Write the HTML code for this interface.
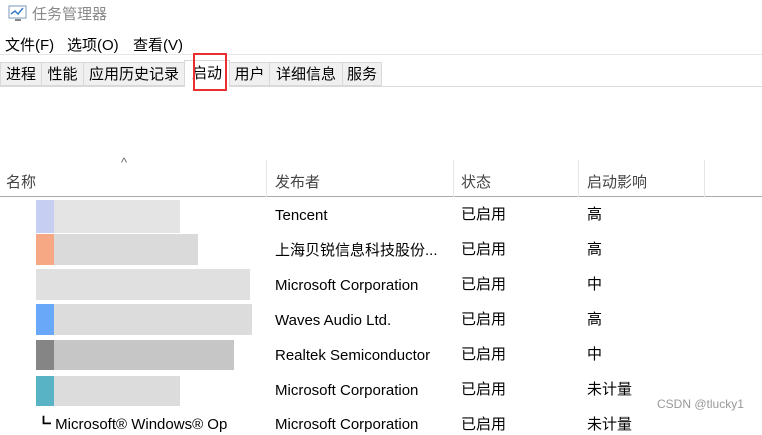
<!DOCTYPE html><html><head><meta charset="utf-8"><style>
body{margin:0;width:762px;height:422px;overflow:hidden;background:#fff;font-family:"Liberation Sans","Noto Sans CJK SC",sans-serif;color:#000;position:relative}
.a{position:absolute;white-space:nowrap}
.t{font-size:15px;line-height:20px}
.tab{position:absolute;top:62px;height:24px;border:1px solid #d9d9d9;background:#f0f0f0;font-size:15px;line-height:24px;text-align:center;box-sizing:border-box}
.vl{position:absolute;top:160px;height:37px;width:1px;background:#e5e5e5}
.blk{position:absolute;background:#dcdcdc}
</style></head><body>
<svg class="a" style="left:8px;top:4px" width="20" height="18"><rect x="1" y="2" width="17" height="12" fill="#fff" stroke="#7a99b8"/><polyline points="3,10 7,7 10,10 15,4" fill="none" stroke="#3a7bc8" stroke-width="1.5"/><rect x="7" y="15" width="6" height="2" fill="#888"/></svg>
<div class="a" style="left:32px;top:3px;font-size:15px;color:#8a8a8a">任务管理器</div>
<div class="a t" style="left:5px;top:36px">文件(F)</div>
<div class="a t" style="left:67px;top:36px">选项(O)</div>
<div class="a t" style="left:133px;top:36px">查看(V)</div>
<div class="a" style="left:0;top:54px;width:762px;height:1px;background:#e6e6e6"></div>
<div class="a" style="left:0;top:86px;width:762px;height:1px;background:#d9d9d9"></div>
<div class="tab" style="left:0;width:42px">进程</div>
<div class="tab" style="left:41px;width:43px">性能</div>
<div class="tab" style="left:83px;width:102px">应用历史记录</div>
<div class="tab" style="left:184px;top:60px;height:27px;width:46px;background:#fff;border-bottom:none;line-height:26px">启动</div>
<div class="tab" style="left:229px;width:41px">用户</div>
<div class="tab" style="left:269px;width:74px">详细信息</div>
<div class="tab" style="left:342px;width:40px">服务</div>
<div class="a" style="left:193px;top:53px;width:34px;height:38px;border:2px solid #e83030;box-sizing:border-box"></div>
<div class="a" style="left:121px;top:155px;font-size:13px;color:#666">^</div>
<div class="a" style="left:0;top:196px;width:762px;height:1px;background:#aaa"></div>
<div class="vl" style="left:266px"></div><div class="vl" style="left:453px"></div><div class="vl" style="left:578px"></div><div class="vl" style="left:704px"></div>
<div class="a t" style="left:6px;top:173px;color:#444">名称</div>
<div class="a t" style="left:275px;top:173px;color:#444">发布者</div>
<div class="a t" style="left:461px;top:173px;color:#444">状态</div>
<div class="a t" style="left:587px;top:173px;color:#444">启动影响</div>
<div class="blk" style="left:36px;top:200px;width:144px;height:33px;background:#e4e4e4"></div><div class="blk" style="left:36px;top:200px;width:18px;height:33px;background:#c6cff2"></div>
<div class="blk" style="left:36px;top:234px;width:162px;height:31px;background:#dadada"></div><div class="blk" style="left:36px;top:234px;width:18px;height:31px;background:#f5a883"></div>
<div class="blk" style="left:36px;top:269px;width:214px;height:31px;background:#e0e0e0"></div>
<div class="blk" style="left:36px;top:304px;width:216px;height:31px;background:#dcdcdc"></div><div class="blk" style="left:36px;top:304px;width:18px;height:31px;background:#69a8f8"></div>
<div class="blk" style="left:36px;top:340px;width:198px;height:30px;background:#c6c6c6"></div><div class="blk" style="left:36px;top:340px;width:18px;height:30px;background:#858585"></div>
<div class="blk" style="left:36px;top:376px;width:144px;height:30px;background:#dcdcdc"></div><div class="blk" style="left:36px;top:376px;width:18px;height:30px;background:#58b4c4"></div>
<div class="a t" style="left:275px;top:206px">Tencent</div><div class="a t" style="left:461px;top:205px">已启用</div><div class="a t" style="left:587px;top:205px">高</div>
<div class="a t" style="left:275px;top:241px">上海贝锐信息科技股份...</div><div class="a t" style="left:461px;top:240px">已启用</div><div class="a t" style="left:587px;top:240px">高</div>
<div class="a t" style="left:275px;top:276px">Microsoft Corporation</div><div class="a t" style="left:461px;top:275px">已启用</div><div class="a t" style="left:587px;top:275px">中</div>
<div class="a t" style="left:275px;top:311px">Waves Audio Ltd.</div><div class="a t" style="left:461px;top:310px">已启用</div><div class="a t" style="left:587px;top:310px">高</div>
<div class="a t" style="left:275px;top:346px">Realtek Semiconductor</div><div class="a t" style="left:461px;top:345px">已启用</div><div class="a t" style="left:587px;top:345px">中</div>
<div class="a t" style="left:275px;top:381px">Microsoft Corporation</div><div class="a t" style="left:461px;top:380px">已启用</div><div class="a t" style="left:587px;top:380px">未计量</div>
<div class="a t" style="left:36px;top:415px">┗ Microsoft® Windows® Op</div>
<div class="a t" style="left:275px;top:415px">Microsoft Corporation</div><div class="a t" style="left:461px;top:415px">已启用</div><div class="a t" style="left:587px;top:415px">未计量</div>
<div class="a" style="left:657px;top:397px;font-size:12px;color:#999">CSDN @tlucky1</div>
</body></html>
